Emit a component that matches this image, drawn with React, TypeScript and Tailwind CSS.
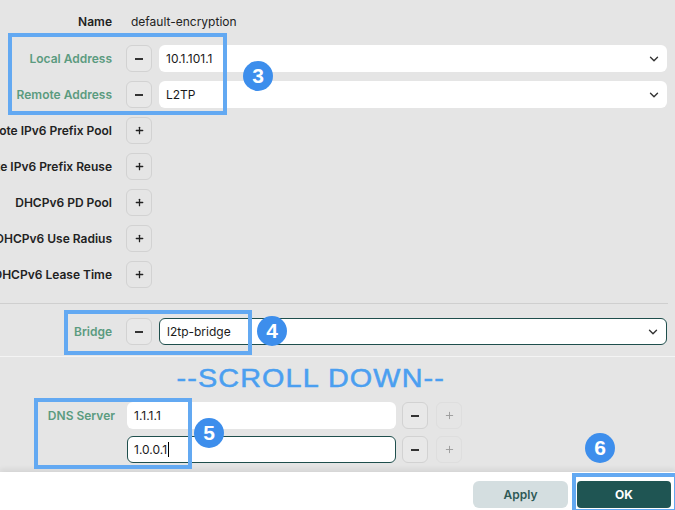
import React from 'react';
import { ChevronDown, Plus } from 'lucide-react';

const GREEN = 'text-[#5b9b7f]';

function RowLabel({ text, green, width = 'w-[112px]' }: { text: string; green?: boolean; width?: string }) {
  return (
    <div className={`${width} flex justify-end shrink-0`}>
      <span className={`whitespace-nowrap shrink-0 text-[12px] font-semibold ${green ? GREEN : 'text-[#222]'}`}>{text}</span>
    </div>
  );
}

function MinusBtn() {
  return (
    <div className="w-[26px] h-[27px] shrink-0 rounded-[6px] border border-[#d2d2d2] bg-[#e8e8e8] flex items-center justify-center">
      <span className="block w-[8px] h-[2px] bg-[#333]" />
    </div>
  );
}

function PlusBtn({ disabled }: { disabled?: boolean }) {
  return (
    <div
      className={`w-[26px] h-[27px] shrink-0 rounded-[6px] border flex items-center justify-center ${
        disabled ? 'border-[#dedede] text-[#9a9a9a]' : 'border-[#d2d2d2] text-[#222]'
      }`}
    >
      <Plus size={11} strokeWidth={disabled ? 2 : 2.8} />
    </div>
  );
}

function Select({ value, focused }: { value: string; focused?: boolean }) {
  return (
    <div
      className={`flex-1 h-[27px] mr-[8px] ml-[7px] rounded-[6px] bg-white flex items-center justify-between pl-[7px] pr-[6px] ${
        focused ? 'border border-[#1f4f4d]' : ''
      }`}
    >
      <span className="text-[12px] text-[#1a1a1a]">{value}</span>
      <ChevronDown size={14} strokeWidth={2.4} className="text-[#333]" />
    </div>
  );
}

function Badge({ n, className }: { n: number; className: string }) {
  return (
    <div
      className={`absolute w-[30px] h-[30px] rounded-full bg-[#3d8eec] text-white flex items-center justify-center text-[21px] font-bold font-['Liberation_Sans',sans-serif] ${className}`}
    >
      {n}
    </div>
  );
}

function Frame({ className }: { className: string }) {
  return <div className={`absolute border-[4px] border-[#63a9f2] ${className}`} />;
}

export default function App() {
  const plusRows = [
    'Remote IPv6 Prefix Pool',
    'Remote IPv6 Prefix Reuse',
    'DHCPv6 PD Pool',
    'DHCPv6 Use Radius',
    'DHCPv6 Lease Time',
  ];

  return (
    <div className="relative w-[675px] h-[510px] overflow-hidden bg-[#e5e5e5] flex flex-col font-['Inter',sans-serif]">
      {/* top form */}
      <div className="pt-[13px]">
        <div className="h-[18px] flex items-center">
          <RowLabel text="Name" />
          <span className="ml-[19px] text-[12px] text-[#222]">default-encryption</span>
        </div>
        <div className="mt-[14px] flex flex-col gap-[9px]">
          <div className="h-[27px] flex items-center">
            <RowLabel text="Local Address" green />
            <div className="ml-[14px]"><MinusBtn /></div>
            <Select value="10.1.101.1" />
          </div>
          <div className="h-[27px] flex items-center">
            <RowLabel text="Remote Address" green />
            <div className="ml-[14px]"><MinusBtn /></div>
            <Select value="L2TP" />
          </div>
          {plusRows.map((r) => (
            <div key={r} className="h-[27px] flex items-center">
              <RowLabel text={r} />
              <div className="ml-[14px]"><PlusBtn /></div>
            </div>
          ))}
        </div>
      </div>

      <div className="mt-[15px] mr-[7px] border-t border-[#cfcfcf]" />

      <div className="mt-[14px] h-[27px] flex items-center">
        <RowLabel text="Bridge" green />
        <div className="ml-[14px]"><MinusBtn /></div>
        <Select value="l2tp-bridge" focused />
      </div>

      <div className="mt-[11px] border-t border-[#f4f4f4]" />

      {/* scroll hint */}
      <div className="h-[42px] flex items-center justify-center pr-[54px]">
        <span className="inline-block scale-x-[1.15] tracking-[1px] text-[25px] leading-none text-[#4b9ff0] [-webkit-text-stroke:0.5px_#4b9ff0] font-['Liberation_Sans',sans-serif]">
          --SCROLL DOWN--
        </span>
      </div>

      {/* DNS */}
      <div className="pt-[3px] flex">
        <div className="w-[115px] h-[27px] flex items-center justify-end shrink-0">
          <span className={`text-[12px] font-semibold ${GREEN}`}>DNS Server</span>
        </div>
        <div className="ml-[12px] flex flex-col gap-[7px]">
          <div className="flex items-center">
            <div className="w-[269px] h-[27px] rounded-[6px] bg-white flex items-center pl-[7px] text-[12px] text-[#1a1a1a]">1.1.1.1</div>
            <div className="ml-[6px]"><MinusBtn /></div>
            <div className="ml-[8px]"><PlusBtn disabled /></div>
          </div>
          <div className="flex items-center">
            <div className="w-[269px] h-[27px] rounded-[6px] bg-white border border-[#1f4f4d] flex items-center pl-[6px] text-[12px] text-[#1a1a1a]">
              1.0.0.1<span className="ml-[1px] inline-block w-[1px] h-[15px] bg-black" />
            </div>
            <div className="ml-[6px]"><MinusBtn /></div>
            <div className="ml-[8px]"><PlusBtn disabled /></div>
          </div>
        </div>
      </div>

      {/* footer */}
      <div className="mt-auto h-[38px] bg-white shadow-[0_-3px_5px_rgba(0,0,0,0.07)] flex items-start justify-end pt-[9px] pr-[4px] gap-[9px]">
        <div className="w-[95px] h-[27px] rounded-[6px] bg-[#d4dee0] flex items-center justify-center text-[12px] font-semibold text-[#2e5956]">
          Apply
        </div>
        <div className="w-[94px] h-[27px] rounded-[4px] bg-[#1f5553] flex items-center justify-center text-[12px] font-bold text-white">
          OK
        </div>
      </div>

      {/* annotations */}
      <Frame className="left-[8px] top-[33px] w-[219px] h-[82px]" />
      <Badge n={3} className="left-[243px] top-[61px]" />
      <Frame className="left-[64px] top-[310px] w-[188px] h-[45px]" />
      <Badge n={4} className="left-[257px] top-[316px]" />
      <Frame className="left-[34px] top-[398px] w-[158px] h-[71px]" />
      <Badge n={5} className="left-[194px] top-[418px]" />
      <Frame className="left-[572px] top-[473px] w-[106px] h-[40px]" />
      <Badge n={6} className="left-[585px] top-[433px]" />
    </div>
  );
}
